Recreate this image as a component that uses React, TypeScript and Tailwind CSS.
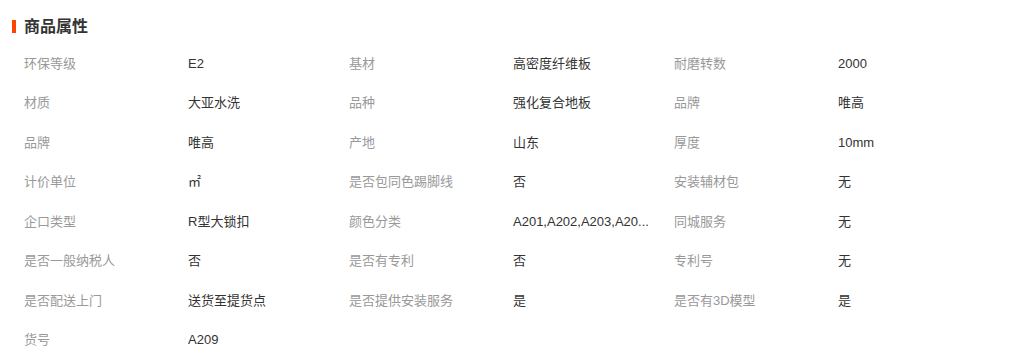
import React from "react";

const rows: [string, string][][] = [
  [["环保等级", "E2"], ["基材", "高密度纤维板"], ["耐磨转数", "2000"]],
  [["材质", "大亚水洗"], ["品种", "强化复合地板"], ["品牌", "唯高"]],
  [["品牌", "唯高"], ["产地", "山东"], ["厚度", "10mm"]],
  [["计价单位", "㎡"], ["是否包同色踢脚线", "否"], ["安装辅材包", "无"]],
  [["企口类型", "R型大锁扣"], ["颜色分类", "A201,A202,A203,A20..."], ["同城服务", "无"]],
  [["是否一般纳税人", "否"], ["是否有专利", "否"], ["专利号", "无"]],
  [["是否配送上门", "送货至提货点"], ["是否提供安装服务", "是"], ["是否有3D模型", "是"]],
  [["货号", "A209"]],
];

export default function App() {
  return (
    <div
      className="w-[1024px] h-[360px] bg-white overflow-hidden"
      style={{ fontFamily: '"Liberation Sans", "Noto Sans CJK SC", sans-serif' }}
    >
      <div className="h-[44px] pt-[17px] pl-[12px]">
        <div className="flex items-center h-[19px]">
          <span className="w-[4px] h-[13px] bg-[#ff4400]" />
          <span className="ml-[8px] text-[16px] leading-[19px] font-bold text-[#333]">商品属性</span>
        </div>
      </div>
      <div className="pl-[24px]">
        {rows.map((row, i) => (
          <div key={i} className="flex h-[39.5px] items-center text-[13px] leading-[16px]">
            {row.map(([label, value], j) => (
              <div key={j} className="flex w-[325px] items-center">
                <span className="w-[164px] shrink-0 text-[#999]">{label}</span>
                <span className="w-[150px] whitespace-nowrap text-[#333]">{value}</span>
              </div>
            ))}
          </div>
        ))}
      </div>
    </div>
  );
}
